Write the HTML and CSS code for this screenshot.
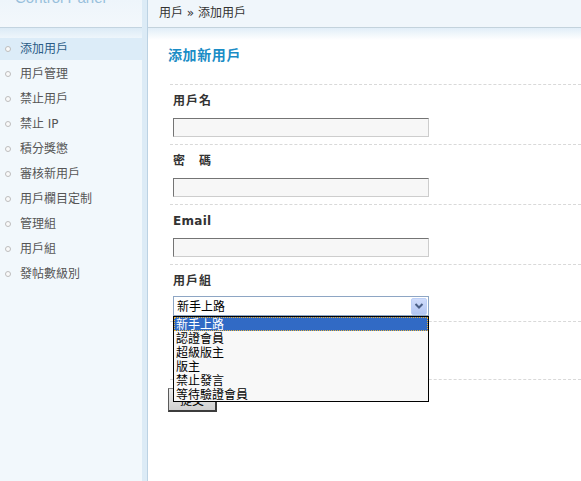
FILE: index.html
```html
<!DOCTYPE html>
<html lang="zh-Hant">
<head>
<meta charset="utf-8">
<title>添加用戶</title>
<link rel="stylesheet" href="styles.css">
</head>
<body>
<div class="layout">
  <aside class="sidebar">
    <div class="brand"><span class="brand-text">Control Panel</span></div>
    <ul class="nav">
      <li class="nav-item active"><span class="dot"></span>添加用戶</li>
      <li class="nav-item"><span class="dot"></span>用戶管理</li>
      <li class="nav-item"><span class="dot"></span>禁止用戶</li>
      <li class="nav-item"><span class="dot"></span>禁止 IP</li>
      <li class="nav-item"><span class="dot"></span>積分獎懲</li>
      <li class="nav-item"><span class="dot"></span>審核新用戶</li>
      <li class="nav-item"><span class="dot"></span>用戶欄目定制</li>
      <li class="nav-item"><span class="dot"></span>管理組</li>
      <li class="nav-item"><span class="dot"></span>用戶組</li>
      <li class="nav-item"><span class="dot"></span>發帖數級別</li>
    </ul>
  </aside>
  <main class="main">
    <div class="topbar">用戶 » 添加用戶</div>
    <div class="content">
      <h2 class="title">添加新用戶</h2>
      <div class="row">
        <div class="label">用戶名</div>
        <div class="input"></div>
      </div>
      <div class="row">
        <div class="label">密　碼</div>
        <div class="input"></div>
      </div>
      <div class="row">
        <div class="label latin">Email</div>
        <div class="input"></div>
      </div>
      <div class="row row-group">
        <div class="label">用戶組</div>
        <div class="select">
          <span class="select-value">新手上路</span>
          <span class="select-arrow">
            <svg width="10" height="8" viewBox="0 0 10 8"><path d="M1.5 2 L5 5.5 L8.5 2" fill="none" stroke="#4a5f86" stroke-width="2"/></svg>
          </span>
          <ul class="options">
            <li class="option selected">新手上路</li>
            <li class="option">認證會員</li>
            <li class="option">超級版主</li>
            <li class="option">版主</li>
            <li class="option">禁止發言</li>
            <li class="option">等待驗證會員</li>
          </ul>
        </div>
      </div>
      <div class="row row-empty"></div>
      <div class="actions">
        <button class="submit" type="button">提交</button>
      </div>
    </div>
  </main>
</div>
</body>
</html>
```

FILE: styles.css
```css
* { box-sizing: border-box; }
html, body { margin: 0; padding: 0; background: #fff; }
body {
  font-family: "DejaVu Sans", "Noto Sans CJK TC", sans-serif;
  font-size: 12px;
  color: #333;
  height: 481px;
  overflow: hidden;
}
.layout { display: flex; height: 481px; }

/* sidebar */
.sidebar {
  width: 147px;
  flex: none;
  background: #f2f8fc;
  border-right: 5px solid #dcebf6;
}
.brand {
  height: 28px;
  border-bottom: 1px solid #c3d4e0;
  background: linear-gradient(#eef5fb, #f3f8fc);
  overflow: hidden;
}
.brand-text {
  display: block;
  margin-top: -10px;
  margin-left: 15px;
  font-family: "Liberation Sans", sans-serif;
  font-size: 15px;
  line-height: 15px;
  color: #98c0dc;
}
.nav {
  list-style: none;
  margin: 0;
  padding: 10px 0 0 0;
  background: linear-gradient(#dcebf6 0, #f2f8fc 12px) no-repeat;
}
.nav-item {
  display: flex;
  align-items: center;
  height: 22px;
  margin-bottom: 3px;
  padding-left: 5px;
  color: #555;
  line-height: 22px;
}
.nav-item.active { background: #dcecf8; color: #2a5b86; }
.dot {
  width: 6px;
  height: 6px;
  border: 1px solid #bdbdbd;
  border-radius: 50%;
  background: #fafafa;
  margin-right: 9px;
  flex: none;
}

/* main */
.main {
  flex: 1;
  border-left: 1px solid #bcd2e3;
  min-width: 0;
}
.topbar {
  height: 28px;
  line-height: 27px;
  padding-left: 11px;
  background: #f0f6fb;
  border-bottom: 1px solid #c3d2dc;
  color: #333;
}
.content {
  padding-left: 20px;
  background: linear-gradient(#e1eef8 0, #ffffff 12px) no-repeat;
  height: 453px;
}
.title {
  margin: 0;
  padding-top: 17px;
  height: 56px;
  line-height: 20px;
  font-size: 14px;
  letter-spacing: 0.6px;
  font-weight: bold;
  color: #1a8cc6;
}
.row {
  margin-left: 2px;
  border-top: 1px dashed #d9d9d9;
  padding: 6px 0 7px 3px;
}
.label {
  line-height: 20px;
  margin-bottom: 7px;
  font-weight: bold;
  letter-spacing: 1px;
  color: #333;
}
.label.latin { letter-spacing: 0.3px; }
.input {
  width: 256px;
  height: 19px;
  background: #f7f7f7;
  border-style: solid;
  border-width: 1px;
  border-color: #747474 #cdcdcd #cdcdcd #747474;
}
.row-group { padding-bottom: 5px; }
.row-group .label { margin-bottom: 5px; }
.select {
  position: relative;
  width: 256px;
  height: 20px;
  border: 1px solid #8ea6c4;
  background: #fff;
  display: flex;
  align-items: center;
  padding-left: 3px;
}
.select-value {
  font-family: "Noto Sans CJK TC", sans-serif;
  color: #000;
  line-height: 16px;
}
.select-arrow {
  margin-left: auto;
  margin-right: 1px;
  width: 16px;
  height: 17px;
  display: flex;
  align-items: center;
  justify-content: center;
  background: linear-gradient(#cfdcfb, #b3c6f3);
  border: 1px solid #bdd0f7;
  border-radius: 2px;
}
.options {
  position: absolute;
  left: -1px;
  top: calc(100% + 1px);
  width: calc(100% + 2px);
  margin: 0;
  padding: 0;
  list-style: none;
  border: 1px solid #000;
  background: #f8f8f8;
  z-index: 5;
}
.option {
  height: 14px;
  line-height: 14px;
  padding-left: 2px;
  font-family: "Noto Sans CJK TC", sans-serif;
  font-size: 12px;
  color: #000;
  white-space: nowrap;
}
.option.selected {
  background: #316ac5;
  color: #fff;
  outline: 1px dotted #e8b33a;
  outline-offset: -1px;
}
.row-empty { height: 58px; padding: 0; }
.actions {
  margin-left: 2px;
  border-top: 1px dashed #d9d9d9;
  padding-top: 8px;
}
.submit {
  margin-left: -2px;
  width: 49px;
  height: 24px;
  padding: 0;
  font-family: "Noto Sans CJK TC", sans-serif;
  font-size: 12px;
  color: #000;
  background: linear-gradient(#ececec, #d0d0d0);
  border-style: solid;
  border-width: 1px 2px 2px 1px;
  border-color: #8a8a8a #3c3c3c #3c3c3c #5a5a5a;
}
```
